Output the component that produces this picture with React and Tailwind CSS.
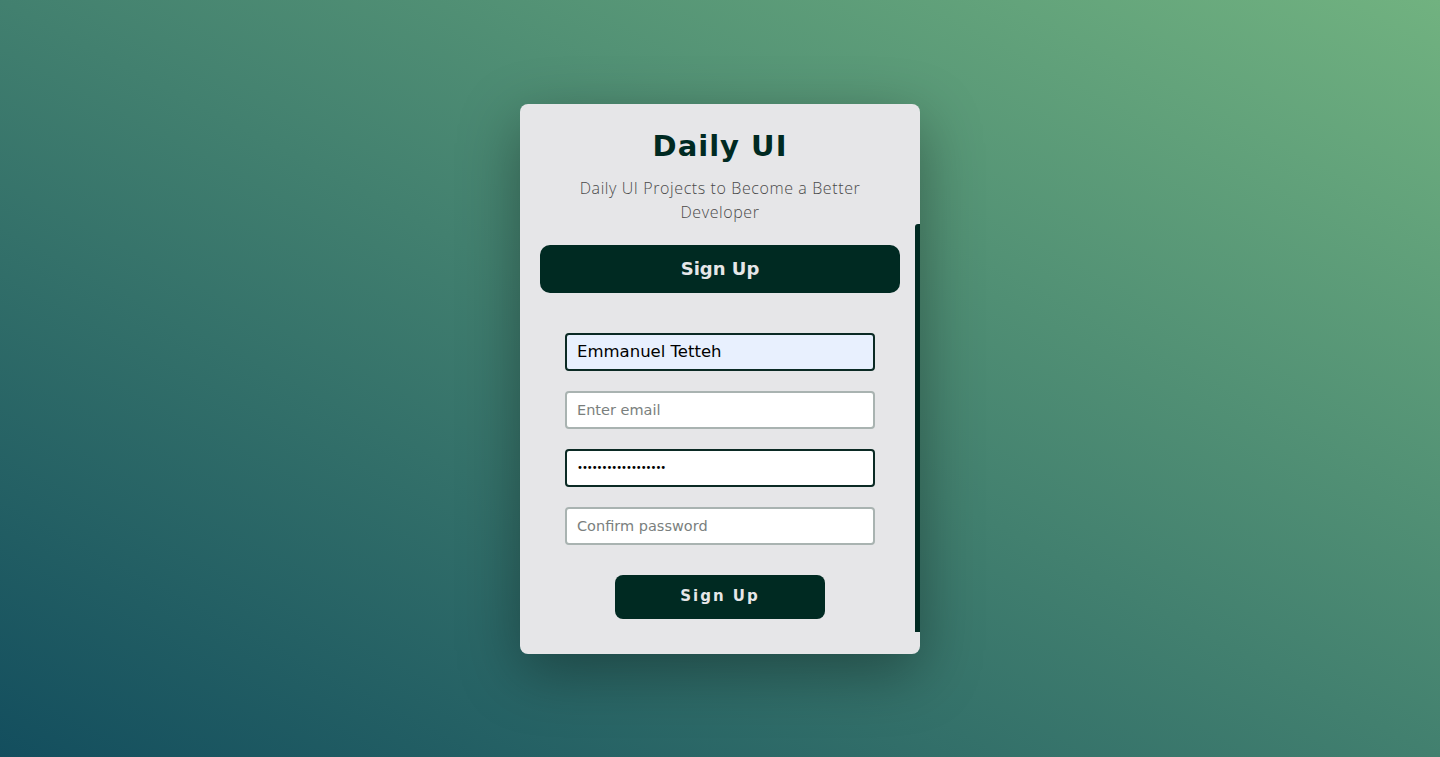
export default function App() {
  const font = { fontFamily: '"DejaVu Sans", "Open Sans", sans-serif' };
  return (
    <div
      className="w-full h-[757px] flex items-center justify-center bg-[linear-gradient(to_top_right,#134e5e,#71b280)]"
      style={font}
    >
      <div className="relative w-[400px] h-[550px] bg-[#e6e6e8] rounded-lg shadow-[0_18px_60px_rgba(0,0,0,0.35)] flex flex-col items-center pt-[26px] px-5 overflow-hidden">
        <div className="absolute right-0 top-[120px] w-[5px] h-[408px] bg-[#002a22] rounded-tl-[3px]"></div>
        <h1 className="text-[29px] font-bold tracking-[1px] text-[#002a22] leading-[32px]">Daily UI</h1>
        <p
          className="mt-[14px] text-[16px] font-light text-[#4a4a4a] text-center leading-[24px] w-[320px] tracking-[0.6px]"
          style={{ fontFamily: '"Open Sans", sans-serif' }}
        >
          Daily UI Projects to Become a Better Developer
        </p>
        <button className="mt-[21px] w-full h-[48px] rounded-[10px] bg-[#002a22] text-[#e6e6e8] font-bold text-[18px]">
          Sign Up
        </button>
        <div className="mt-[40px] flex flex-col gap-[20px] w-[310px]">
          <input
            defaultValue="Emmanuel Tetteh"
            className="h-[38px] rounded-[4px] border-2 border-[#0b2a24] bg-[#e8f0fe] px-[10px] text-[16.5px] text-black outline-none"
          />
          <input
            placeholder="Enter email"
            className="h-[38px] rounded-[4px] border-2 border-[#a9b3b1] bg-white px-[10px] text-[14.5px] text-black placeholder:text-[#7a7f7e] outline-none"
          />
          <input
            type="password"
            defaultValue="aaaaaaaaaaaaaaaaaa"
            className="h-[38px] rounded-[4px] border-2 border-[#0b2a24] bg-white px-[10px] text-[10px] tracking-[-1px] text-black outline-none"
          />
          <input
            placeholder="Confirm password"
            className="h-[38px] rounded-[4px] border-2 border-[#a9b3b1] bg-white px-[10px] text-[14.5px] text-black placeholder:text-[#7a7f7e] outline-none"
          />
        </div>
        <button className="mt-[30px] w-[210px] h-[44px] rounded-[8px] bg-[#002a22] text-[#e6e6e8] font-bold text-[15px] tracking-[2px]">
          Sign Up
        </button>
      </div>
    </div>
  );
}
